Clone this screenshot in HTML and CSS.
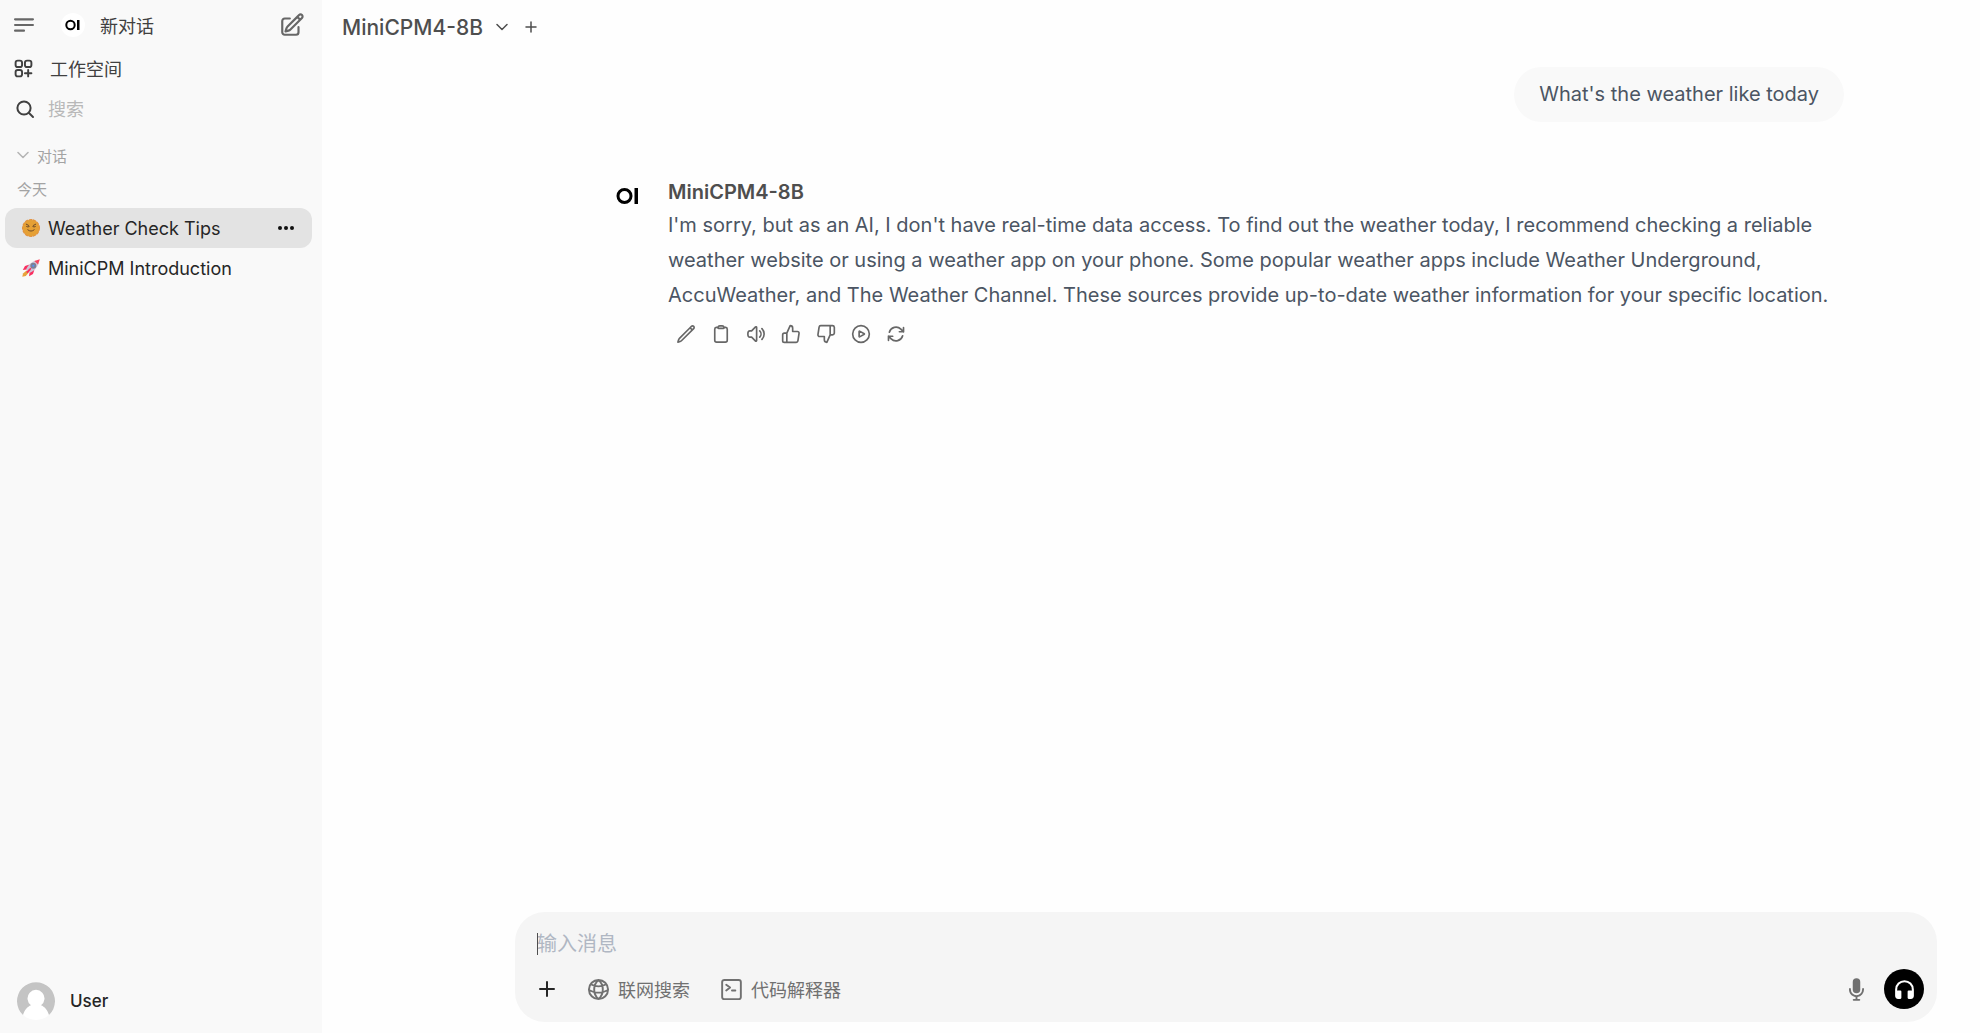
FILE: index.html
```html
<!DOCTYPE html>
<html lang="zh-CN">
<head>
  <meta charset="UTF-8" />
  <meta name="viewport" content="width=device-width, initial-scale=1.0"/>
  <title>MiniCPM4-8B</title>
  <link rel="stylesheet" href="styles.css">
</head>
<body>

  <aside class="sidebar">
    <div class="top-row">
      <button class="icon-btn" aria-label="菜单">
        <svg class="icon-lg" viewBox="0 0 24 24"><path d="M3.75 6.75h16.5M3.75 12h16.5M3.75 17.25H12"/></svg>
      </button>
      <a class="new-chat" href="#">
        <svg class="logo" viewBox="0 0 24 24"><circle class="disc" cx="12" cy="12" r="12"/><circle class="ring" cx="9.5" cy="12" r="4.2"/><rect class="bar" x="16" y="7" width="2.5" height="10"/></svg>
        <span>新对话</span>
      </a>
      <button class="icon-btn" aria-label="新建">
        <svg class="icon-lg" viewBox="0 0 24 24"><path d="m16.862 4.487 1.687-1.688a1.875 1.875 0 1 1 2.652 2.652L10.582 16.07a4.5 4.5 0 0 1-1.897 1.13L6 18l.8-2.685a4.5 4.5 0 0 1 1.13-1.897l8.932-8.931Zm0 0L19.5 7.125M18 14v4.75A2.25 2.25 0 0 1 15.75 21H5.25A2.25 2.25 0 0 1 3 18.75V8.25A2.25 2.25 0 0 1 5.25 6H10"/></svg>
      </button>
    </div>

    <a class="workspace" href="#">
      <svg class="icon-md" viewBox="0 0 24 24"><path d="M13.5 16.875h3.375m0 0h3.375m-3.375 0V13.5m0 3.375v3.375M6 10.5h2.25a2.25 2.25 0 0 0 2.25-2.25V6a2.25 2.25 0 0 0-2.25-2.25H6A2.25 2.25 0 0 0 3.75 6v2.25A2.25 2.25 0 0 0 6 10.5Zm0 9.75h2.25A2.25 2.25 0 0 0 10.5 18v-2.25a2.25 2.25 0 0 0-2.25-2.25H6a2.25 2.25 0 0 0-2.25 2.25V18A2.25 2.25 0 0 0 6 20.25Zm9.75-9.75H18a2.25 2.25 0 0 0 2.25-2.25V6A2.25 2.25 0 0 0 18 3.75h-2.25A2.25 2.25 0 0 0 13.5 6v2.25a2.25 2.25 0 0 0 2.25 2.25Z"/></svg>
      <span>工作空间</span>
    </a>

    <label class="search">
      <svg class="icon-sm" viewBox="0 0 20 20"><circle cx="9" cy="9" r="6.6"/><path d="M14 14l4 4"/></svg>
      <input type="text" placeholder="搜索" aria-label="搜索" />
    </label>

    <button class="folder">
      <svg class="icon-xs" viewBox="0 0 24 24"><path d="M2 7l10 10 10-10"/></svg>
      <span>对话</span>
    </button>
    <div class="period">今天</div>

    <nav class="chats">
      <div class="chat active">
        <a href="#">
          <svg class="emoji" viewBox="0 0 18 18">
            <circle class="sun-rays" cx="9" cy="9" r="8"/>
            <circle class="sun-face" cx="9" cy="9" r="8"/>
            <path class="sun-line" d="M4.3 5.2l2.3 1.2M13.7 5.2l-2.3 1.2M4.6 7.6q1.3.9 2.6 0M10.8 7.6q1.3.9 2.6 0M5.8 10.8q3.2 2.8 6.4 0"/>
          </svg>
          <span>Weather Check Tips</span>
        </a>
        <button class="more" aria-label="更多">
          <svg viewBox="0 0 16 6"><circle cx="2" cy="3" r="2"/><circle cx="8" cy="3" r="2"/><circle cx="14" cy="3" r="2"/></svg>
        </button>
      </div>
      <div class="chat">
        <a href="#">
          <svg class="emoji" viewBox="0 0 18 18">
            <path fill="#f92f60" d="M7.5 5.5L3 7 .8 11l4-.6zM12.5 10.5L11 15l-4 2.2.6-4z"/>
            <path fill="#e8a33c" d="M4.5 11.5L1 14.5.3 17.7l3.5-.8 3-3.3z"/>
            <path fill="#cdc4d6" d="M4 10.5C6 6 9 3 13.5 1.5L16.5 4.5C15 9 12 12 7.5 14z"/>
            <path fill="#f8455f" d="M12.4 1.9L17.8.2 16.1 5.6z"/>
            <circle fill="#5092ff" stroke="#7d8296" cx="11.3" cy="6.7" r="2"/>
            <path fill="#f92f60" d="M9.5 8.5l-2 1-3.3 3.5 1.5 1.2 3-3.2z"/>
          </svg>
          <span>MiniCPM Introduction</span>
        </a>
      </div>
    </nav>

    <button class="user">
      <svg class="avatar" viewBox="0 0 38 38"><circle fill="#fff" cx="19" cy="19" r="19"/><path fill="#c4c4c4" d="M6 33a19 19 0 1 1 26 0C30.5 28 27.5 24.5 24 23.2A8.5 8.5 0 1 0 14 23.2C10.5 24.5 7.5 28 6 33z"/></svg>
      <span>User</span>
    </button>
  </aside>

  <main class="main">
    <header class="header">
      <button class="model">
        <span>MiniCPM4-8B</span>
        <svg class="icon-xs" viewBox="0 0 24 24"><path d="M2 7l10 10 10-10"/></svg>
      </button>
      <button class="add-model" aria-label="添加模型">
        <svg class="icon-xs" viewBox="0 0 24 24"><path d="M12 2v20M2 12h20"/></svg>
      </button>
    </header>

    <section class="messages">
      <div class="question">What's the weather like today</div>

      <article class="answer">
        <svg class="answer-logo" viewBox="0 0 24 24"><circle class="ring" cx="8.5" cy="12" r="6.5"/><rect class="bar" x="18.5" y="4" width="3.5" height="16"/></svg>
        <div class="answer-body">
          <h2>MiniCPM4-8B</h2>
          <p>I'm sorry, but as an AI, I don't have real-time data access. To find out the weather today, I recommend checking a reliable weather website or using a weather app on your phone. Some popular weather apps include Weather Underground, AccuWeather, and The Weather Channel. These sources provide up-to-date weather information for your specific location.</p>
          <div class="actions">
            <button aria-label="编辑"><svg viewBox="0 0 24 24"><path d="M16.862 4.487l1.687-1.688a1.875 1.875 0 112.652 2.652L6.832 19.82a4.5 4.5 0 01-1.897 1.13l-2.685.8.8-2.685a4.5 4.5 0 011.13-1.897L16.863 4.487zm0 0L19.5 7.125"/></svg></button>
            <button aria-label="复制"><svg viewBox="0 0 24 24"><path d="M15.666 3.888A2.25 2.25 0 0013.5 2.25h-3c-1.03 0-1.9.693-2.166 1.638m7.332 0c.055.194.084.4.084.612v0a.75.75 0 01-.75.75H9a.75.75 0 01-.75-.75v0c0-.212.03-.418.084-.612m7.332 0c.646.049 1.288.11 1.927.184 1.1.128 1.907 1.077 1.907 2.185V19.5a2.25 2.25 0 01-2.25 2.25H6.75A2.25 2.25 0 014.5 19.5V6.257c0-1.108.806-2.057 1.907-2.185a48.208 48.208 0 011.927-.184"/></svg></button>
            <button aria-label="朗读"><svg viewBox="0 0 24 24"><path d="M19.114 5.636a9 9 0 010 12.728M16.463 8.288a5.25 5.25 0 010 7.424M6.75 8.25l4.72-4.72a.75.75 0 011.28.53v15.88a.75.75 0 01-1.28.53l-4.72-4.72H4.51c-.88 0-1.704-.507-1.938-1.354A9.01 9.01 0 012.25 12c0-.83.112-1.633.322-2.396C2.806 8.756 3.63 8.25 4.51 8.25H6.75z"/></svg></button>
            <button aria-label="赞"><svg viewBox="0 0 24 24"><path d="M14 9V5a3 3 0 00-3-3l-4 9v11h11.28a2 2 0 002-1.7l1.38-9a2 2 0 00-2-2.3zM7 22H4a2 2 0 01-2-2v-7a2 2 0 012-2h3"/></svg></button>
            <button aria-label="踩"><svg viewBox="0 0 24 24"><path d="M10 15v4a3 3 0 003 3l4-9V2H5.72a2 2 0 00-2 1.7l-1.38 9a2 2 0 002 2.3zm7-13h2.67A2.31 2.31 0 0122 4v7a2.31 2.31 0 01-2.33 2H17"/></svg></button>
            <button aria-label="继续"><svg viewBox="0 0 24 24"><path d="M22 12a10 10 0 11-20 0 10 10 0 0120 0zM15.91 11.672a.375.375 0 010 .656l-5.603 3.113a.375.375 0 01-.557-.328V8.887c0-.286.307-.466.557-.327l5.603 3.112z"/></svg></button>
            <button aria-label="重新生成"><svg viewBox="0 0 24 24"><path d="M16.023 9.348h4.992v-.001M2.985 19.644v-4.992m0 0h4.992m-4.993 0l3.181 3.183a8.25 8.25 0 0013.803-3.7M4.031 9.865a8.25 8.25 0 0113.803-3.7l3.181 3.182m0-4.991v4.99"/></svg></button>
          </div>
        </div>
      </article>
    </section>

    <form class="composer">
      <div class="prompt">
        <textarea rows="1" placeholder="输入消息" aria-label="输入消息"></textarea>
      </div>
      <div class="tools">
        <button type="button" class="plus" aria-label="添加">
          <svg class="icon-sm" viewBox="0 0 20 20"><path d="M10 3v14M3 10h14"/></svg>
        </button>
        <button type="button" class="tool">
          <svg class="icon-md" viewBox="0 0 24 24"><path d="M12 2a10 10 0 100 20 10 10 0 000-20zM12 2c-6 5-6 15 0 20M12 2c6 5 6 15 0 20M4 6.5q8 4.5 16 0M2 12.5q10 5.5 20 0"/></svg>
          <span>联网搜索</span>
        </button>
        <button type="button" class="tool">
          <svg class="icon-md" viewBox="0 0 24 24"><path d="M4.5 2h15A2.25 2.25 0 0121.75 4.25v15.5a2.25 2.25 0 01-2.25 2.25h-15a2.25 2.25 0 01-2.25-2.25V4.25A2.25 2.25 0 014.5 2zM6.5 7l4 3-4 3M12.5 13H16"/></svg>
          <span>代码解释器</span>
        </button>
        <button type="button" class="mic" aria-label="语音输入">
          <svg viewBox="0 0 20 20"><path d="M7 4a3 3 0 016 0v6a3 3 0 11-6 0V4z"/><path d="M5.5 9.643a.75.75 0 00-1.5 0V10c0 3.06 2.29 5.585 5.25 5.954V17.5h-1.5a.75.75 0 000 1.5h4.5a.75.75 0 000-1.5h-1.5v-1.546A6.001 6.001 0 0016 10v-.357a.75.75 0 00-1.5 0V10a4.5 4.5 0 01-9 0v-.357z"/></svg>
        </button>
        <button type="button" class="call" aria-label="语音通话">
          <svg viewBox="0 0 24 24"><path d="M12 5a7 7 0 0 0-7 7v1.17c.313-.11.65-.17 1-.17h2a1 1 0 0 1 1 1v6a1 1 0 0 1-1 1H6a3 3 0 0 1-3-3v-6a9 9 0 0 1 18 0v6a3 3 0 0 1-3 3h-2a1 1 0 0 1-1-1v-6a1 1 0 0 1 1-1h2c.35 0 .687.06 1 .17V12a7 7 0 0 0-7-7Z"/></svg>
        </button>
      </div>
    </form>
  </main>

</body>
</html>
```
FILE: styles.css
```css
* {
  box-sizing: border-box;
}
body {
  margin: 0;
  min-height: 100vh;
  display: flex;
  font-family: Inter, "Noto Sans CJK SC", sans-serif;
  font-size: 18px;
  color: #404040;
  background: #fefefe;
}
button, input, textarea {
  font: inherit;
  color: inherit;
  background: none;
  border: none;
  padding: 0;
  margin: 0;
}
button {
  display: flex;
  align-items: center;
  cursor: pointer;
}
a {
  color: inherit;
  text-decoration: none;
}
svg {
  flex: none;
  fill: none;
  stroke: currentColor;
  stroke-width: 2;
  stroke-linecap: round;
  stroke-linejoin: round;
}
.icon-lg {
  width: 26px;
  height: 26px;
}
.icon-md {
  width: 23px;
  height: 23px;
}
.icon-sm {
  width: 20px;
  height: 20px;
}
.icon-xs {
  width: 12px;
  height: 12px;
  stroke-width: 3;
}

/* sidebar */
.sidebar {
  width: 322px;
  flex: none;
  display: flex;
  flex-direction: column;
  padding: 5px 10px 8px 5px;
  background: #f9f9f9;
}
.top-row {
  display: flex;
  align-items: center;
  height: 40px;
  padding: 0 7px 0 6px;
}
.top-row .icon-btn {
  color: #676767;
}
.new-chat {
  flex: 1;
  display: flex;
  align-items: center;
  gap: 15px;
  padding-left: 24px;
}
.logo {
  width: 24px;
  height: 24px;
  stroke: none;
}
.disc {
  fill: #fff;
}
.ring {
  fill: none;
  stroke: #000;
  stroke-width: 2;
}
.bar {
  fill: #000;
  stroke: none;
}
.workspace {
  display: flex;
  align-items: center;
  gap: 15px;
  height: 46px;
  padding-left: 7px;
}
.search {
  display: flex;
  align-items: center;
  gap: 13px;
  height: 36px;
  padding-left: 10px;
}
.search input {
  flex: 1;
  min-width: 0;
  outline: none;
}
.search input::placeholder {
  color: #b8b8b8;
}
.folder {
  gap: 8px;
  height: 36px;
  margin-top: 10px;
  padding-left: 12px;
  font-size: 15px;
  color: #a3a3a3;
}
.folder .icon-xs {
  color: #b4b4b4;
}
.period {
  height: 35px;
  padding-left: 12px;
  font-size: 15px;
  line-height: 34px;
  color: #a3a3a3;
}
.chat {
  display: flex;
  align-items: center;
  height: 40px;
  padding: 0 18px 0 17px;
  border-radius: 12px;
  color: #262626;
}
.chat.active {
  background: #e3e3e3;
}
.chat a {
  flex: 1;
  display: flex;
  align-items: center;
  gap: 8px;
}
.emoji {
  width: 18px;
  height: 18px;
  stroke: none;
}
.sun-rays {
  stroke: #e3923f;
  stroke-width: 2;
  stroke-dasharray: 2 2;
}
.sun-face {
  fill: #e5a035;
}
.sun-line {
  stroke: #6d4a2a;
  stroke-width: 1;
}
.more svg {
  width: 16px;
  height: 6px;
  fill: #111;
  stroke: none;
}
.user {
  gap: 15px;
  height: 48px;
  margin-top: auto;
  padding-left: 12px;
  font-size: 17px;
  font-weight: 500;
  color: #262626;
}
.avatar {
  width: 38px;
  height: 38px;
  stroke: none;
}

/* chat */
.main {
  flex: 1;
  min-width: 0;
  display: flex;
  flex-direction: column;
  padding: 0 43px 11px 20px;
}
.header {
  display: flex;
  align-items: center;
  gap: 17px;
  height: 54px;
  color: #4e4e4e;
}
.model {
  gap: 13px;
  font-size: 21px;
  font-weight: 500;
}
.messages {
  flex: 1;
  display: flex;
  flex-direction: column;
  padding: 13px 93px 0 274px;
  font-size: 20px;
  line-height: 35px;
  color: #4b5563;
}
.question {
  align-self: flex-end;
  padding: 10px 25px;
  border-radius: 28px;
  background: #f9f9f9;
}
.answer {
  display: flex;
  gap: 28px;
  margin-top: 54px;
}
.answer-logo {
  width: 24px;
  height: 24px;
  margin-top: 8px;
}
.answer-logo .ring {
  stroke-width: 3;
}
.answer-body {
  flex: 1;
}
.answer h2 {
  margin: 0;
  font-size: 20px;
  font-weight: 600;
  line-height: 32px;
  color: #4e4e4e;
}
.answer p {
  margin: 0;
}
.actions {
  display: flex;
  gap: 15px;
  padding: 11px 8px;
  color: #676767;
}
.actions svg {
  width: 20px;
  height: 20px;
}

/* message box */
.composer {
  margin-left: 173px;
  padding: 17px 13px 13px 22px;
  border-radius: 30px;
  background: #f5f5f5;
}
.prompt {
  display: flex;
  position: relative;
}
.prompt::before {
  content: "";
  position: absolute;
  left: 0;
  top: 4px;
  width: 1px;
  height: 22px;
  background: #4e4e4e;
}
.prompt textarea {
  flex: 1;
  height: 30px;
  font-size: 20px;
  line-height: 30px;
  resize: none;
  outline: none;
}
.prompt textarea::placeholder {
  color: #b0b7c3;
}
.tools {
  display: flex;
  align-items: center;
  margin-top: 10px;
  color: #707070;
}
.plus {
  padding-right: 8px;
  color: #262626;
}
.tool {
  gap: 8px;
  margin-left: 22px;
  padding-right: 8px;
}
.mic {
  margin-left: auto;
}
.mic svg {
  width: 25px;
  height: 25px;
  fill: currentColor;
  stroke: none;
}
.call {
  width: 40px;
  height: 40px;
  margin-left: 15px;
  justify-content: center;
  border-radius: 50%;
  color: #fff;
  background: #000;
}
.call svg {
  width: 25px;
  height: 25px;
  fill: currentColor;
  stroke: none;
}
```
